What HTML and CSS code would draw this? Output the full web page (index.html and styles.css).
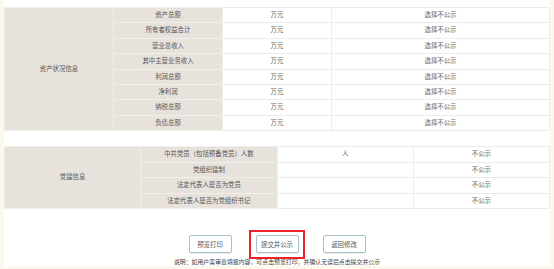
FILE: index.html
```html
<!DOCTYPE html>
<html lang="zh-CN">
<head>
  <meta charset="UTF-8">
  <title>信息公示预览</title>
  <link rel="stylesheet" href="styles.css">
</head>
<body>
  <div class="panel">
    <table class="info-table asset-table">
      <colgroup>
        <col class="c20"><col class="c20"><col class="c20"><col class="c40">
      </colgroup>
      <tr>
        <td class="label" rowspan="8">资产状况信息</td>
        <td class="label">资产总额</td>
        <td>万元</td>
        <td>选择不公示</td>
      </tr>
      <tr><td class="label">所有者权益合计</td><td>万元</td><td>选择不公示</td></tr>
      <tr><td class="label">营业总收入</td><td>万元</td><td>选择不公示</td></tr>
      <tr><td class="label">其中主营业务收入</td><td>万元</td><td>选择不公示</td></tr>
      <tr><td class="label">利润总额</td><td>万元</td><td>选择不公示</td></tr>
      <tr><td class="label">净利润</td><td>万元</td><td>选择不公示</td></tr>
      <tr><td class="label">纳税总额</td><td>万元</td><td>选择不公示</td></tr>
      <tr><td class="label">负债总额</td><td>万元</td><td>选择不公示</td></tr>
    </table>

    <table class="info-table party-table">
      <colgroup>
        <col class="c25"><col class="c25"><col class="c25"><col class="c25">
      </colgroup>
      <tr>
        <td class="label" rowspan="4">党建信息</td>
        <td class="label">中共党员（包括预备党员）人数</td>
        <td>人</td>
        <td>不公示</td>
      </tr>
      <tr><td class="label">党组织建制</td><td></td><td>不公示</td></tr>
      <tr><td class="label">法定代表人是否为党员</td><td></td><td>不公示</td></tr>
      <tr><td class="label">法定代表人是否为党组织书记</td><td></td><td>不公示</td></tr>
    </table>

    <div class="actions">
      <button type="button" class="btn">预览打印</button>
      <button type="button" class="btn btn-marked">提交并公示</button>
      <button type="button" class="btn">返回修改</button>
    </div>
    <p class="note">说明：如用户需审查填报内容，可点击预览打印，并确认无误后点击提交并公示</p>
  </div>
</body>
</html>
```

FILE: styles.css
```css
body {
  margin: 0;
  background: #fcf8ee;
  font-family: "Noto Sans CJK SC", "Noto Sans", sans-serif;
  color: #555;
}

.panel {
  margin-left: 4px;
  width: 546px;
  height: 259px;
  padding-top: 7px;
  background: #fff;
}

.info-table {
  width: 546px;
  border-collapse: collapse;
  table-layout: fixed;
  font-size: 6.4px;
}

.info-table td {
  border: 1px solid #ececec;
  padding: 0;
  text-align: center;
  line-height: 1;
  color: #666;
}

.info-table td.label {
  background: #e8e2dc;
  border-color: #f2efeb;
  color: #555;
}

.asset-table tr {
  height: 15.4px;
}

.party-table {
  margin-top: 15px;
}

.party-table tr {
  height: 15.5px;
}

.c20 { width: 20%; }
.c40 { width: 40%; }
.c25 { width: 25%; }

.actions {
  display: flex;
  justify-content: center;
  gap: 24px;
  margin-top: 26px;
}

.btn {
  position: relative;
  width: 43px;
  height: 18px;
  padding: 0;
  background: #fff;
  border: 1px solid #a9bfcc;
  border-radius: 2px;
  box-shadow: 0 1px 1px rgba(0, 0, 0, 0.08);
  font-family: inherit;
  font-size: 6.4px;
  color: #555;
}

.btn-marked::after {
  content: "";
  position: absolute;
  top: -6px;
  bottom: -7px;
  left: -8px;
  right: -7px;
  border: 2px solid #e8232a;
}

.note {
  margin: 5px 0 0 0;
  text-align: center;
  font-size: 5.9px;
  line-height: 8px;
  color: #444;
}
```
